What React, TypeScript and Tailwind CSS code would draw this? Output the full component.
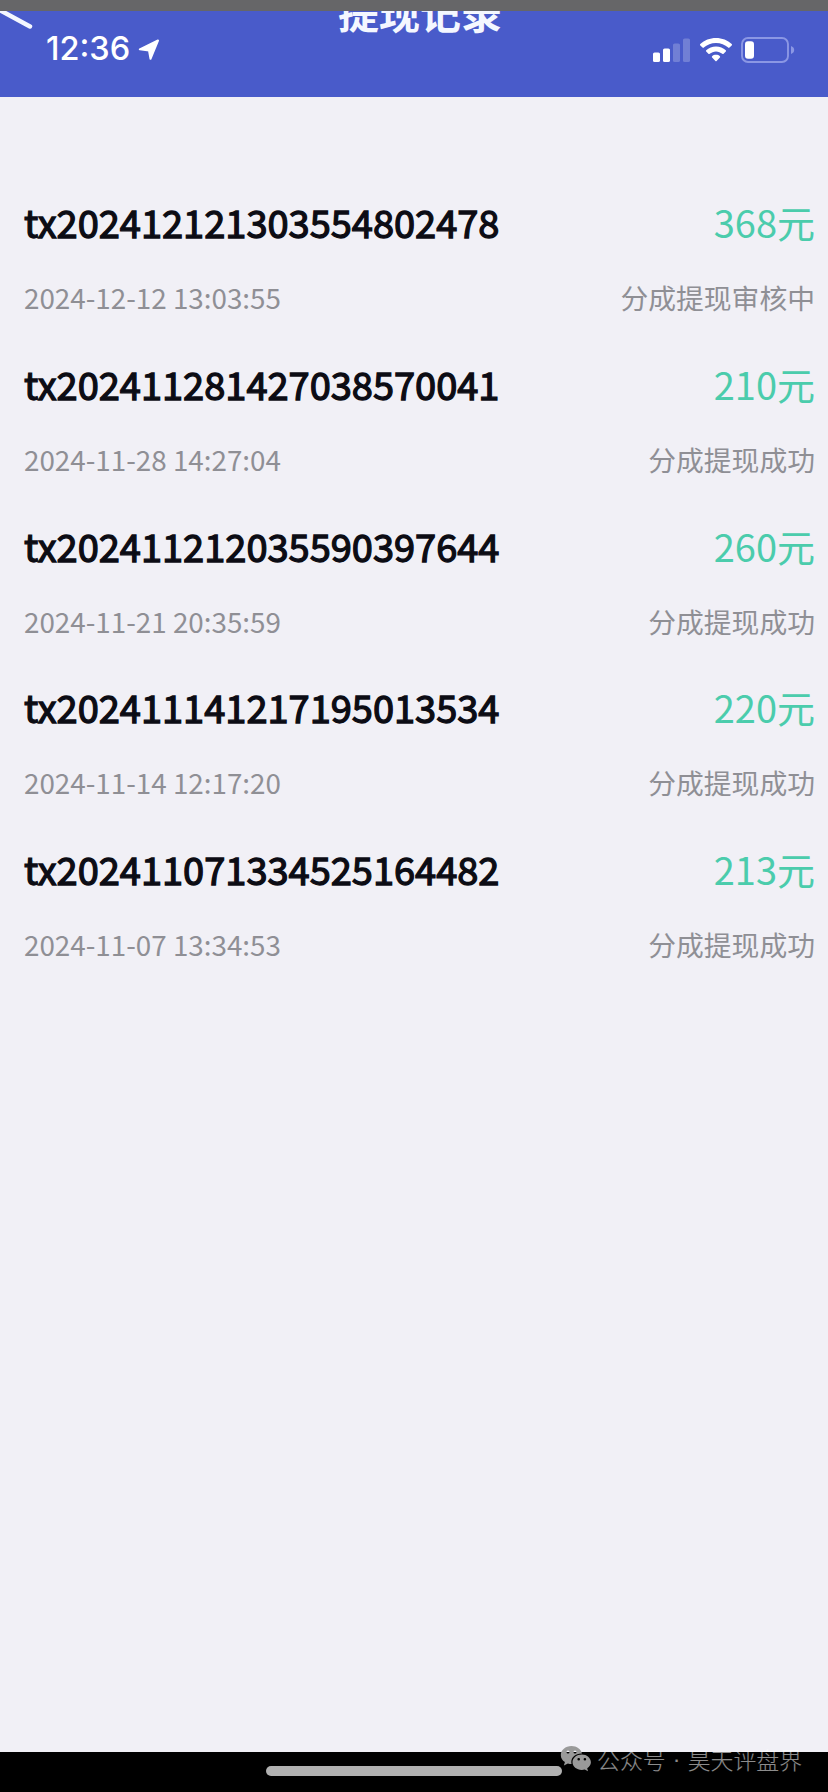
type WithdrawRecord = {
  id: string;
  amount: number;
  time: string;
  status: string;
};

const records: WithdrawRecord[] = [
  {
    id: "tx202412121303554802478",
    amount: 368,
    time: "2024-12-12 13:03:55",
    status: "分成提现审核中",
  },
  {
    id: "tx202411281427038570041",
    amount: 210,
    time: "2024-11-28 14:27:04",
    status: "分成提现成功",
  },
  {
    id: "tx202411212035590397644",
    amount: 260,
    time: "2024-11-21 20:35:59",
    status: "分成提现成功",
  },
  {
    id: "tx202411141217195013534",
    amount: 220,
    time: "2024-11-14 12:17:20",
    status: "分成提现成功",
  },
  {
    id: "tx202411071334525164482",
    amount: 213,
    time: "2024-11-07 13:34:53",
    status: "分成提现成功",
  },
];

const LocationIcon = () => (
  <svg width="22" height="22" viewBox="0 0 22 22" fill="white">
    <path
      d="M20 1.500 12.500 19.800 11 11.500 1.800 10.300Z"
      stroke="white"
      strokeWidth="2"
      strokeLinejoin="round"
    />
  </svg>
);

const SignalIcon = () => (
  <svg width="38" height="24" viewBox="0 0 38 24" fill="white">
    <rect x="0" y="14.5" width="7" height="9.5" rx="1.6" />
    <rect x="10" y="10.5" width="7" height="13.5" rx="1.6" />
    <rect x="20" y="5.5" width="7" height="18.5" rx="1.6" opacity="0.22" />
    <rect x="30" y="0.5" width="7" height="23.5" rx="1.6" opacity="0.22" />
  </svg>
);

const WifiIcon = () => (
  <svg width="32" height="24" viewBox="0 0 32 24" fill="white">
    <path d="M16 0C9.9 0 4.3 2.3 .3 6.1c-.4.4-.4.9 0 1.3l2.2 2.2c.4.4.9.4 1.3 0C7 6.600 11.300 4.900 16 4.900s9 1.700 12.200 4.700c.4.4.9.4 1.3 0l2.200-2.200c.4-.4.4-.9 0-1.300C27.700 2.300 22.100 0 16 0Z" />
    <path d="M16 8.500c-3.800 0-7.200 1.400-9.800 3.700-.4.4-.4.9 0 1.300l2.200 2.200c.4.4.9.4 1.300.1C11.400 14.300 13.600 13.400 16 13.400s4.600.9 6.300 2.400c.4.3.9.3 1.300-.1l2.200-2.200c.4-.4.4-.9 0-1.300-2.600-2.300-6-3.700-9.800-3.700Z" />
    <path d="M16 16.800c-1.500 0-2.900.5-3.900 1.400-.4.4-.4.9 0 1.300l3.300 3.400c.3.4.9.4 1.200 0l3.300-3.400c.4-.4.4-.9 0-1.300-1-.9-2.400-1.400-3.900-1.400Z" />
  </svg>
);

const BatteryIcon = () => (
  <svg width="54" height="26" viewBox="0 0 54 26">
    <rect
      x="1"
      y="1"
      width="46"
      height="24"
      rx="6"
      fill="none"
      stroke="#8b97e4"
      strokeWidth="1.9"
    />
    <rect x="4" y="4.200" width="9" height="17.500" rx="3" fill="white" />
    <path d="M50 9c2 .7 3.200 2.200 3.200 4s-1.200 3.300-3.200 4Z" fill="#8b97e4" />
  </svg>
);

const WechatIcon = () => (
  <svg width="32" height="28" viewBox="0 0 32 28" fill="#9a9a9a">
    <path
      fillRule="evenodd"
      d="M11.500 1C5.400 1 .8 5 .8 10c0 3 1.500 5.400 4.100 7l-1 3.500 4-2c1.200.4 2.400.5 3.700.5-.2-.7-.3-1.300-.3-2 0-4.900 4.300-8.500 10-8.500h.7C21.100 4.200 16.800 1 11.500 1ZM8 5.500a1.500 1.500 0 1 1 0 3 1.500 1.500 0 0 1 0-3Zm7 0a1.500 1.500 0 1 1 0 3 1.500 1.500 0 0 1 0-3Z"
    />
    <path
      fillRule="evenodd"
      d="M21.800 9.500c-5.200 0-9.300 3.500-9.300 7.700s4.100 7.700 9.300 7.700c1 0 2-.2 3-.5l3.200 1.800-.8-3c2.300-1.400 3.700-3.600 3.700-6 0-4.200-4.100-7.700-9.100-7.700ZM18.700 13a1.300 1.300 0 1 1 0 2.600 1.300 1.300 0 0 1 0-2.600Zm6.200 0a1.300 1.300 0 1 1 0 2.600 1.300 1.300 0 0 1 0-2.600Z"
    />
  </svg>
);

const RecordRow = ({ record }: { record: WithdrawRecord }) => (
  <li className="h-[161.75px]">
    <div className="flex justify-between text-[38px] leading-[56px]">
      <span className="text-[#0c0c14] [-webkit-text-stroke:1.3px_#0c0c14]">
        {record.id}
      </span>
      <span className="text-[#4bccac]">{record.amount}元</span>
    </div>
    <div className="mt-[27px] flex justify-between text-[27.8px] leading-10 text-[#8f8f95]">
      <span>{record.time}</span>
      <span>{record.status}</span>
    </div>
  </li>
);

const App = () => {
  return (
    <div className="flex h-[1792px] w-[828px] flex-col overflow-hidden bg-[#f1f0f6] font-['Noto_Sans_CJK_SC',sans-serif]">
      <div className="h-[11px] shrink-0 bg-[#666668]" />

      {/* nav bar, scrolled up under the status bar */}
      <header className="relative h-[86px] shrink-0 overflow-hidden bg-[#495bca]">
        <svg
          className="absolute top-0 left-0"
          width="36"
          height="20"
          viewBox="0 0 36 20"
        >
          <path
            d="M-4-3 30 15.500"
            stroke="#f4f7ff"
            strokeWidth="4.500"
            strokeLinecap="round"
          />
        </svg>
        <h1 className="absolute -top-[25px] left-[338px] text-[41px] leading-[50px] font-bold text-[#f4f7ff]">
          提现记录
        </h1>
        <div className="flex h-full items-center pt-[1px] pr-[33px] pb-[10px] pl-[46px]">
          <span className="font-['Inter',sans-serif] text-[32.500px] leading-none font-medium text-white">
            12:36
          </span>
          <span className="ml-2">
            <LocationIcon />
          </span>
          <div className="ml-auto flex items-center">
            <SignalIcon />
            <span className="ml-[9px]">
              <WifiIcon />
            </span>
            <span className="ml-[9px]">
              <BatteryIcon />
            </span>
          </div>
        </div>
      </header>

      <main className="flex-1 pt-[97px] pr-[13px] pl-6">
        <ul>
          {records.map((record) => (
            <RecordRow key={record.id} record={record} />
          ))}
        </ul>
      </main>

      {/* home indicator */}
      <footer className="relative h-10 shrink-0 bg-black pt-[14px]">
        <div className="ml-[266px] h-[10px] w-[296px] rounded-full bg-[#b1b1b1]" />
        <div className="absolute -top-[7px] left-[560px] flex items-center">
          <WechatIcon />
          <div className="ml-[5px] flex text-[22.900px] leading-[28px] font-light whitespace-nowrap text-white/55">
            <span>公众号</span>
            <span className="w-[22px] text-center font-['Liberation_Sans',sans-serif]">
              ·
            </span>
            <span>昊天评盘界</span>
          </div>
        </div>
      </footer>
    </div>
  );
};

export default App;
